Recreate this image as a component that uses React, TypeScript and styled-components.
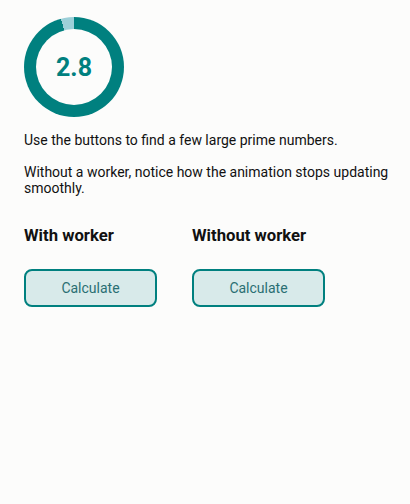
import styled, { createGlobalStyle } from "styled-components";

const GlobalStyle = createGlobalStyle`
  body {
    margin: 0;
    background: #fcfcfb;
    font-family: Roboto, "Noto Sans", sans-serif;
    color: #111;
  }
`

const Page = styled.main`
  padding: 17px 14px 24px 24px;
`

const Ring = styled.div<{ $progress: number }>`
  width: 100px;
  height: 100px;
  border-radius: 50%;
  background: conic-gradient(
    #00807f 0 ${(p) => p.$progress * 360}deg,
    #9ccfd8 ${(p) => p.$progress * 360}deg 360deg
  );
  display: flex;
  align-items: center;
  justify-content: center;
`

const RingInner = styled.div`
  width: 76px;
  height: 76px;
  border-radius: 50%;
  background: #fcfcfb;
  display: flex;
  align-items: center;
  justify-content: center;
  color: #00807f;
  font-weight: 700;
  font-size: 25px;
`

const Intro = styled.div`
  display: flex;
  flex-direction: column;
  gap: 16px;
  margin-top: 15px;
`

const Text = styled.p`
  margin: 0;
  font-size: 14px;
  line-height: 16px;
`

const Columns = styled.div`
  display: grid;
  grid-template-columns: 168px 168px;
  margin-top: 30px;
`

const Column = styled.section`
  display: flex;
  flex-direction: column;
  align-items: flex-start;
  gap: 23px;
`

const Heading = styled.h3`
  margin: 0;
  font-size: 16.7px;
  font-weight: 700;
  line-height: 20px;
`

const Button = styled.button`
  width: 133px;
  height: 38px;
  border: 2px solid #00807f;
  border-radius: 8px;
  background: #d8eaea;
  color: #2a6f73;
  font-family: inherit;
  font-size: 14px;
  cursor: pointer;
`

export default function App() {
  return (
    <>
      <GlobalStyle />
      <Page>
        <Ring $progress={0.958}>
          <RingInner>2.8</RingInner>
        </Ring>
        <Intro>
          <Text>Use the buttons to find a few large prime numbers.</Text>
          <Text>Without a worker, notice how the animation stops updating smoothly.</Text>
        </Intro>
        <Columns>
          <Column>
            <Heading>With worker</Heading>
            <Button>Calculate</Button>
          </Column>
          <Column>
            <Heading>Without worker</Heading>
            <Button>Calculate</Button>
          </Column>
        </Columns>
      </Page>
    </>
  )
}
